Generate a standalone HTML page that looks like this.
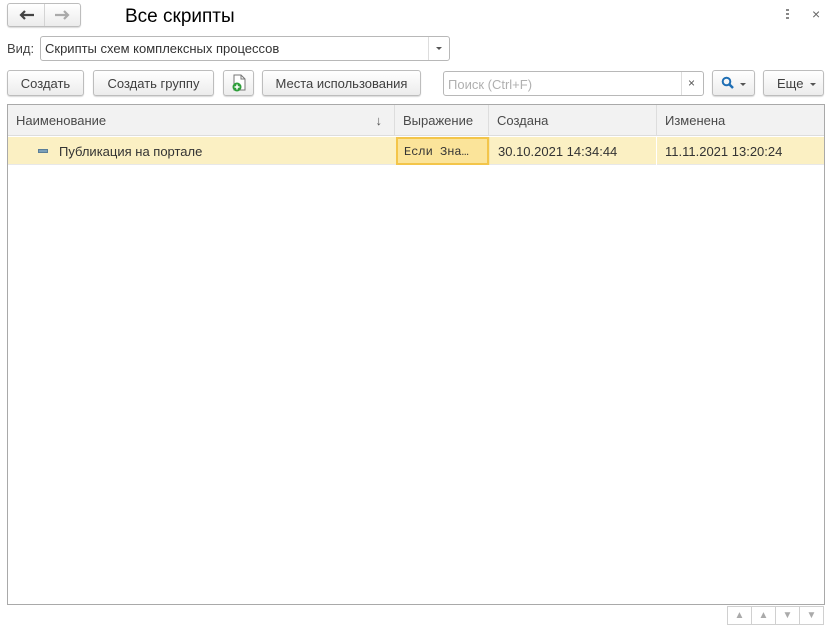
<!DOCTYPE html><html><head><meta charset="utf-8"><style>
*{box-sizing:border-box;margin:0;padding:0}
body{width:835px;height:632px;background:#fff;font-family:"Liberation Sans",sans-serif;font-size:13px;color:#333;position:relative;overflow:hidden}
.a{position:absolute}
.btn{position:absolute;border:1px solid #bdbdbd;border-radius:3px;background:linear-gradient(#fff,#ececec);box-shadow:0 1px 1px rgba(0,0,0,.15);text-align:center;line-height:23px;color:#404040}
.th{position:absolute;top:0;height:31px;line-height:32px;padding-left:8px;border-right:1px solid #ddd;color:#4a4a4a}
.td{position:absolute;top:0;height:28px;line-height:29px;padding-left:9px;color:#333}
.nb{position:absolute;top:0;width:24px;height:19px;border:1px solid #d0d0d0;border-left:none;color:#aaa;font-size:10px;text-align:center;line-height:18px}
</style></head><body>
<div class="btn" style="left:7px;top:3px;width:74px;height:24px"></div>
<div class="a" style="left:44px;top:4px;width:1px;height:22px;background:#d4d4d4"></div>
<svg class="a" style="left:19px;top:10px" width="16" height="10"><path d="M2 5H15M6 1L2 5L6 9" stroke="#444" stroke-width="2.2" fill="none"/></svg>
<svg class="a" style="left:54px;top:10px" width="16" height="10"><path d="M1 5H14M10 1L14 5L10 9" stroke="#aaa" stroke-width="2.2" fill="none"/></svg>
<div class="a" style="left:125px;top:6px;font-size:19px;color:#000">Все скрипты</div>
<div class="a" style="left:786px;top:9px;width:3px;font-size:0"><div style="height:2px;background:#888;margin-bottom:2px"></div><div style="height:2px;background:#888;margin-bottom:2px"></div><div style="height:2px;background:#888"></div></div>
<div class="a" style="left:812px;top:6px;font-size:14px;color:#666">×</div>
<div class="a" style="left:7px;top:41px;color:#444">Вид:</div>
<div class="a" style="left:40px;top:36px;width:410px;height:25px;border:1px solid #b8b8b8;border-radius:3px"></div>
<div class="a" style="left:45px;top:41px;color:#333">Скрипты схем комплексных процессов</div>
<div class="a" style="left:428px;top:37px;width:1px;height:23px;background:#ddd"></div>
<div class="a" style="left:436px;top:47px;border:3px solid transparent;border-top:3px solid #555"></div>
<div class="btn" style="left:7px;top:70px;width:77px;height:26px;line-height:25px">Создать</div>
<div class="btn" style="left:93px;top:70px;width:121px;height:26px;line-height:25px">Создать группу</div>
<div class="btn" style="left:223px;top:70px;width:31px;height:26px"></div>
<svg class="a" style="left:230px;top:74px" width="18" height="18"><path d="M4 1H11L15 5V16H4Z" fill="#fff" stroke="#777"/><path d="M11 1V5H15" fill="none" stroke="#777"/><circle cx="7" cy="13" r="4.5" fill="#2e9e3a"/><path d="M7 10.5V15.5M4.5 13H9.5" stroke="#fff" stroke-width="1.5"/></svg>
<div class="btn" style="left:262px;top:70px;width:159px;height:26px;line-height:25px">Места использования</div>
<div class="a" style="left:443px;top:71px;width:261px;height:25px;border:1px solid #b8b8b8;border-radius:3px"></div>
<div class="a" style="left:448px;top:77px;color:#b0b0b0">Поиск (Ctrl+F)</div>
<div class="a" style="left:681px;top:72px;width:1px;height:23px;background:#ddd"></div>
<div class="a" style="left:688px;top:76px;color:#555;font-size:12px">×</div>
<div class="btn" style="left:712px;top:70px;width:43px;height:26px"></div>
<svg class="a" style="left:721px;top:76px" width="14" height="14"><circle cx="5.5" cy="5.5" r="3.8" stroke="#1f6fb5" stroke-width="2" fill="none"/><path d="M8.5 8.5L12 12" stroke="#1f6fb5" stroke-width="2.5"/></svg>
<div class="a" style="left:740px;top:83px;border:3px solid transparent;border-top:3px solid #555"></div>
<div class="btn" style="left:763px;top:70px;width:61px;height:26px;line-height:25px;text-align:left;padding-left:13px">Еще</div>
<div class="a" style="left:810px;top:83px;border:3px solid transparent;border-top:3px solid #555"></div>
<div class="a" style="left:7px;top:104px;width:818px;height:501px;border:1px solid #a9a9a9"></div>
<div class="a" style="left:8px;top:105px;width:816px;height:31px;background:#f2f2f2;border-bottom:1px solid #ddd">
<div class="th" style="left:0;width:387px">Наименование<span style="position:absolute;right:12px;color:#555">↓</span></div>
<div class="th" style="left:387px;width:94px">Выражение</div>
<div class="th" style="left:481px;width:168px">Создана</div>
<div class="th" style="left:649px;width:167px;border:none">Изменена</div>
</div>
<div class="a" style="left:8px;top:137px;width:816px;height:28px;background:#fbf0c3;border-bottom:1px solid #e8e8e8">
<div class="a" style="left:30px;top:12px;width:10px;height:4px;background:#7b9fb8;border:1px solid #5a7e98"></div>
<div class="td" style="left:42px">Публикация на портале</div>
<div class="a" style="left:388px;top:0;width:93px;height:28px;background:#fbe49a;border:2px solid #f3c54a;font-family:'Liberation Mono',monospace;font-size:12px;line-height:26px;padding-left:6px;color:#333">Если Зна…</div>
<div class="a" style="left:481px;top:0;width:1px;height:28px;background:#f4e6b0"></div>
<div class="td" style="left:481px">30.10.2021 14:34:44</div>
<div class="a" style="left:648px;top:0;width:1px;height:28px;background:#fff"></div>
<div class="td" style="left:648px">11.11.2021 13:20:24</div>
</div>
<div class="a" style="left:727px;top:606px;width:97px;height:19px;border-left:1px solid #d0d0d0">
<div class="nb" style="left:0">▲</div><div class="nb" style="left:24px">▲</div><div class="nb" style="left:48px">▼</div><div class="nb" style="left:72px">▼</div>
</div>
</body></html>
